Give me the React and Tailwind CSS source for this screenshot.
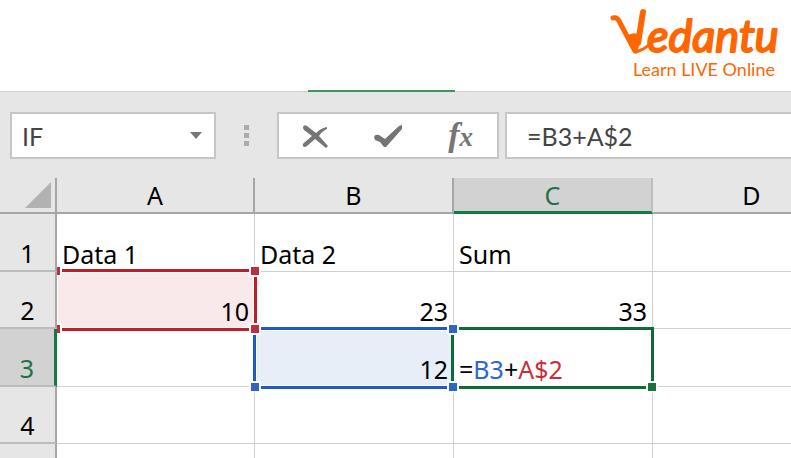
import { useState } from 'react';

const columns = ['A', 'B', 'C', 'D'];

const rows = [
    { id: 1, height: 'h-[58px]', cells: ['Data 1', 'Data 2', 'Sum', ''] },
    { id: 2, height: 'h-[57px]', cells: ['10', '23', '33', ''] },
    { id: 3, height: 'h-[58px]', cells: ['', '12', '=B3+A$2', ''] },
    { id: 4, height: 'h-[57px]', cells: ['', '', '', ''] },
];

const active = { col: 'C', row: 3 };

function Logo() {
    return (
        <div className="flex flex-col items-end text-[#ff6600]">
            <svg viewBox="0 0 170 52" className="h-[52px] w-[170px] overflow-visible" role="img" aria-label="Vedantu">
                <g fill="none" stroke="currentColor" strokeLinecap="round" strokeLinejoin="round">
                    <path d="M4 11 Q8 10 10 14 L26 44" strokeWidth="5" />
                    <path d="M34 5 L29 36" strokeWidth="6" />
                    <path d="M29 36 L27 45 Q36 42 41 37" strokeWidth="3" />
                </g>
                <path d="M18 29 Q24 24 31 28 L27 46 Z" fill="currentColor" />
                <text x="38" y="45" fill="currentColor" stroke="currentColor" strokeWidth="2" strokeLinejoin="round" fontSize="45" fontWeight="400" fontStyle="italic" fontFamily="Lato, sans-serif">edantu</text>
            </svg>
            <p className="mr-1 text-[18px] leading-[20px]">Learn LIVE Online</p>
        </div>
    );
}

function Handle({ className }) {
    return <span className={`absolute size-3 border-2 border-white ${className}`} />;
}

function Outline({ cell }) {
    if (cell === 'A2') {
        return (
            <span className="pointer-events-none absolute -top-[3px] -right-[3px] -bottom-[3px] left-0 z-20 border-y-[3px] border-r-[3px] border-[#bd1e2b]">
                <span className="absolute inset-0 border border-white" />
                <Handle className="-top-[7px] -right-[7px] bg-[#bd2f3a]" />
                <span className="absolute -top-[7px] left-0 h-3 w-[5px] border-y-2 border-r-2 border-white bg-[#bd2f3a]" />
                <span className="absolute -bottom-[7px] left-0 h-3 w-[5px] border-y-2 border-r-2 border-white bg-[#bd2f3a]" />
            </span>
        );
    }
    if (cell === 'B3') {
        return (
            <span className="pointer-events-none absolute -top-[2px] right-0 -bottom-[3px] -left-[2px] z-20 border-y-[3px] border-l-[3px] border-[#1f5bc4]">
                <span className="absolute inset-0 border border-white" />
                <Handle className="-top-[7px] -left-[7px] bg-[#bd2f3a]" />
                <Handle className="-bottom-[7px] -left-[7px] bg-[#2f66c4]" />
            </span>
        );
    }
    if (cell === 'C3') {
        return (
            <span className="pointer-events-none absolute -top-[2px] -right-[2px] -bottom-[3px] -left-[3px] z-30 border-[3px] border-[#0f6b35]">
                <Handle className="-top-[7px] -left-[7px] bg-[#2f66c4]" />
                <Handle className="-bottom-[7px] -left-[7px] bg-[#2f66c4]" />
                <Handle className="-right-[7px] -bottom-[7px] bg-[#1b7341]" />
            </span>
        );
    }
    return null;
}

function CellText({ cell, value }) {
    if (cell === 'C3') {
        return <>=<span className="text-[#2f66d0]">B3</span>+<span className="text-[#cb2c3c]">A$2</span></>;
    }
    return value;
}

function FormulaBar() {
    const [name, setName] = useState('IF');
    const [formula, setFormula] = useState('=B3+A$2');

    return (
        <div className="flex h-[86px] shrink-0 items-start bg-[#e6e6e6] pt-5 pl-[10px] text-[#444444]">
            <div className="flex h-[47px] w-[206px] shrink-0 items-center border-2 border-[#c6c6c6] bg-white">
                <input aria-label="Name box" value={name} onChange={(e) => setName(e.target.value)} className="min-w-0 flex-1 pl-[10px] text-[25px] leading-8 outline-none" />
                <button type="button" aria-label="Show names" className="px-3">
                    <svg viewBox="0 0 12 7" className="h-[7px] w-3" fill="#777777"><path d="M0 0h12L6 7z" /></svg>
                </button>
            </div>
            <div className="flex h-[47px] w-[61px] shrink-0 flex-col items-center justify-center gap-[3px]">
                <span className="size-[5px] bg-[#ababab]" />
                <span className="size-[5px] bg-[#ababab]" />
                <span className="size-[5px] bg-[#ababab]" />
            </div>
            <div className="flex h-[47px] w-[222px] shrink-0 items-center border-2 border-[#c6c6c6] bg-white text-[#757575]">
                <button type="button" aria-label="Cancel" className="flex flex-1 justify-center">
                    <svg viewBox="0 0 26 24" className="h-6 w-[26px]" fill="currentColor">
                        <path d="M1 4 Q1 0 5 2 L14 9 Q19 4 25 3 L25 5 Q20 7 17 12 L26 22 L24 24 L13 15 L5 22 Q2 24 1 22 Q0 20 3 18 L10 12 L2 6 Z" />
                    </svg>
                </button>
                <button type="button" aria-label="Enter" className="flex flex-1 justify-center">
                    <svg viewBox="0 0 28 24" className="h-6 w-7" fill="currentColor">
                        <path d="M0 13 Q1 10 5 11 L11 15 L25 2 L28 1 L28 5 L12 23 L10 23 L6 18 L1 16 Z" />
                    </svg>
                </button>
                <button type="button" aria-label="Insert function" className="flex flex-1 items-baseline justify-center font-[family-name:'Liberation_Serif'] text-[34px] leading-8 font-bold italic">
                    f<span className="text-[27px]">x</span>
                </button>
            </div>
            <div className="ml-[6px] flex h-[47px] min-w-0 flex-1 items-center border-2 border-r-0 border-[#c6c6c6] bg-white">
                <input aria-label="Formula" value={formula} onChange={(e) => setFormula(e.target.value)} className="min-w-0 flex-1 pl-5 text-[25px] leading-8 outline-none" />
            </div>
        </div>
    );
}

function Sheet() {
    return (
        <table className="w-[852px] table-fixed border-separate border-spacing-0 font-[family-name:'Noto_Sans',sans-serif] text-[25px] leading-6 text-black">
            <colgroup>
                <col className="w-[57px]" />
                <col className="w-[198px]" />
                <col className="w-[199px]" />
                <col className="w-[199px]" />
                <col className="w-[199px]" />
            </colgroup>
            <thead>
                <tr className="h-9">
                    <td className="border-r-2 border-b-2 border-[#a6a6a6] bg-[#e6e6e6] p-0">
                        <svg viewBox="0 0 26 26" className="mr-1 ml-auto size-[26px]" fill="#b2b2b2"><path d="M26 0V26H0z" /></svg>
                    </td>
                    {columns.map((c) => (
                        <th key={c} scope="col" className={`border-r-2 p-0 font-normal ${c === active.col ? 'border-r-[#bdbdbd] border-b-[3px] border-b-[#107c41] bg-[#d2d2d2] text-[#217346]' : 'border-b-2 border-[#a6a6a6] bg-[#e6e6e6]'}`}>
                            {c}
                        </th>
                    ))}
                </tr>
            </thead>
            <tbody>
                {rows.map((row) => (
                    <tr key={row.id} className={row.height}>
                        <th scope="row" className={`border-b-2 border-b-[#bcbcbc] p-0 pb-[5px] align-bottom font-normal ${row.id === active.row ? 'border-r-[3px] border-r-[#107c41] bg-[#d2d2d2] text-[#217346]' : 'border-r-2 border-r-[#a6a6a6] bg-[#e6e6e6]'}`}>
                            {row.id}
                        </th>
                        {row.cells.map((value, i) => {
                            const cell = columns[i] + row.id;
                            const fill = cell === 'A2' ? 'bg-[#f9e9ea]' : cell === 'B3' ? 'bg-[#e8eef8]' : 'bg-white';
                            return (
                                <td key={cell} className={`relative border-r border-b border-[#d0d0d0] px-[5px] pt-0 pb-[5px] align-bottom ${fill} ${/^\d+$/.test(value) ? 'text-right' : 'text-left'}`}>
                                    <CellText cell={cell} value={value} />
                                    <Outline cell={cell} />
                                </td>
                            );
                        })}
                    </tr>
                ))}
                <tr className="h-[58px]">
                    <td className="border-r-2 border-[#a6a6a6] bg-[#e6e6e6]" />
                    {columns.map((c) => <td key={c} className="border-r border-[#d0d0d0]" />)}
                </tr>
            </tbody>
        </table>
    );
}

export default function App() {
    return (
        <div className="flex h-screen flex-col overflow-hidden bg-white font-[family-name:Lato,sans-serif]">
            <header className="relative flex h-[92px] shrink-0 justify-end border-b border-[#cfcfcf] pt-[7px] pr-[12px]">
                <Logo />
                <span className="absolute -bottom-px left-[308px] h-[2px] w-[147px] bg-[#3f9562]" />
            </header>
            <FormulaBar />
            <main className="min-h-0 flex-1 overflow-hidden">
                <Sheet />
            </main>
        </div>
    );
}
